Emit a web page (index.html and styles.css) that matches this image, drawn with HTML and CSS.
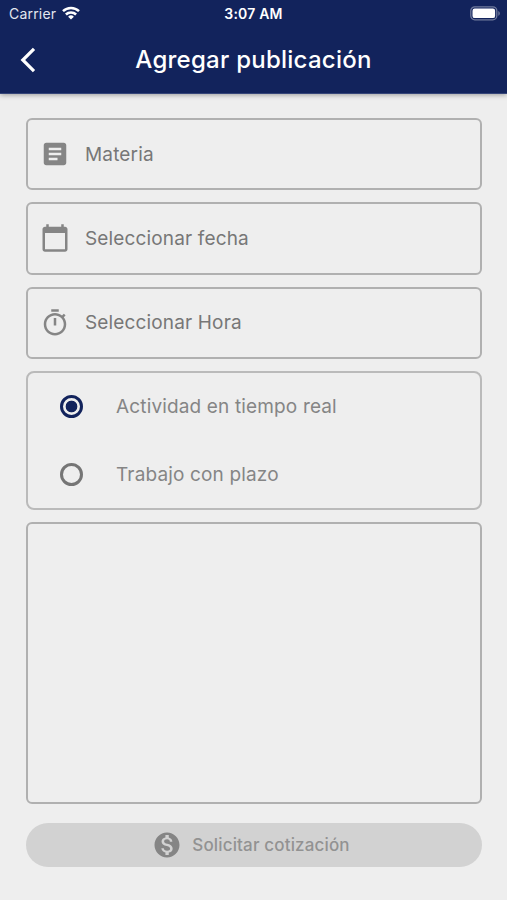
FILE: index.html
```html
<!DOCTYPE html>
<html lang="es">
<head>
    <meta charset="UTF-8">
    <meta name="viewport" content="width=device-width, initial-scale=1.0">
    <title>Agregar publicación</title>
    <link rel="stylesheet" href="styles.css">
</head>
<body>

    <header class="header">
        <!-- Barra de estado -->
        <div class="status-bar">
            <div class="carrier">
                <span>Carrier</span>
                <svg class="wifi" viewBox="0 0 18 14" fill="none" stroke="#fff" stroke-width="2.5">
                    <path d="M1 5.2a11.4 11.4 0 0 1 16 0"/>
                    <path d="M3.9 8.5a7.2 7.2 0 0 1 10.2 0"/>
                    <path d="M9 13.6l-2.9-2.9a4.1 4.1 0 0 1 5.8 0z" fill="#fff" stroke="none"/>
                </svg>
            </div>
            <div class="clock">3:07 AM</div>
            <div class="battery-wrap">
                <svg class="battery" viewBox="0 0 31 15">
                    <rect x="0.8" y="0.8" width="26" height="13" rx="4" fill="none" stroke="#fff" stroke-opacity="0.4" stroke-width="1.3"/>
                    <rect x="2.5" y="2.5" width="22.6" height="9.6" rx="2.2" fill="#fff"/>
                    <path d="M28.3 5v4.8c2-.8 2-4 0-4.8z" fill="#fff" fill-opacity="0.4"/>
                </svg>
            </div>
        </div>

        <!-- Titulo -->
        <div class="nav-bar">
            <button class="back-btn" aria-label="Volver">
                <svg viewBox="0 0 16 26" fill="none" stroke="#fff" stroke-width="3.2">
                    <path d="M14 1.8L2.8 13 14 24.2"/>
                </svg>
            </button>
            <h1>Agregar publicación</h1>
        </div>
    </header>

    <main class="form">
        <div class="field">
            <svg class="icon" viewBox="0 0 24 24">
                <path d="M19 3H5c-1.1 0-2 .9-2 2v14c0 1.1.9 2 2 2h14c1.1 0 2-.9 2-2V5c0-1.1-.9-2-2-2zm-5 14H7v-2h7v2zm3-4H7v-2h10v2zm0-4H7V7h10v2z"/>
            </svg>
            <span>Materia</span>
        </div>

        <div class="field">
            <svg class="icon" viewBox="0 0 24 24">
                <path d="M20 3h-1V1h-2v2H7V1H5v2H4c-1.1 0-2 .9-2 2v16c0 1.1.9 2 2 2h16c1.1 0 2-.9 2-2V5c0-1.1-.9-2-2-2zm0 18H4V8h16v13z"/>
            </svg>
            <span>Seleccionar fecha</span>
        </div>

        <div class="field">
            <svg class="icon" viewBox="0 0 24 24">
                <path d="M15 1H9v2h6V1zm-4 13h2V8h-2v6zm8.03-6.61l1.42-1.42c-.43-.51-.9-.99-1.41-1.41l-1.42 1.42C16.07 4.74 14.12 4 12 4c-4.97 0-9 4.03-9 9s4.02 9 9 9 9-4.03 9-9c0-2.12-.74-4.07-1.97-5.61zM12 20c-3.87 0-7-3.13-7-7s3.13-7 7-7 7 3.13 7 7-3.13 7-7 7z"/>
            </svg>
            <span>Seleccionar Hora</span>
        </div>

        <!-- Tipo de actividad -->
        <div class="options">
            <div class="option">
                <div class="radio checked"></div>
                <span>Actividad en tiempo real</span>
            </div>
            <div class="option">
                <div class="radio"></div>
                <span>Trabajo con plazo</span>
            </div>
        </div>

        <div class="description"></div>

        <button class="submit-btn" disabled>
            <svg class="icon" viewBox="0 0 24 24">
                <path d="M12 2C6.48 2 2 6.48 2 12s4.48 10 10 10 10-4.48 10-10S17.52 2 12 2zm1.41 16.09V20h-2.67v-1.93c-1.71-.36-3.16-1.46-3.27-3.4h1.96c.1 1.05.82 1.87 2.65 1.87 1.96 0 2.4-.98 2.4-1.59 0-.83-.44-1.61-2.67-2.14-2.48-.6-4.18-1.62-4.18-3.67 0-1.72 1.39-2.84 3.11-3.21V4h2.67v1.95c1.86.45 2.79 1.86 2.85 3.39H14.3c-.05-1.11-.64-1.87-2.22-1.87-1.5 0-2.4.68-2.4 1.64 0 .84.65 1.39 2.67 1.91s4.18 1.39 4.18 3.91c-.01 1.83-1.38 2.83-3.12 3.16z"/>
            </svg>
            <span>Solicitar cotización</span>
        </button>
    </main>

</body>
</html>
```
FILE: styles.css
```css
* {
    margin: 0;
    padding: 0;
    box-sizing: border-box;
}

body {
    font-family: Inter, Roboto, sans-serif;
    background-color: #eeeeee;
    min-height: 100vh;
}

.header {
    height: 94px;
    background-color: #12235c;
    color: #fff;
    border-bottom: 1px solid #354579;
    box-shadow: 0 1px 5px rgba(0, 0, 0, 0.35);
}

.status-bar {
    display: grid;
    grid-template-columns: 1fr auto 1fr;
    align-items: center;
    height: 27px;
    padding: 0 6px 0 9px;
    font-size: 14px;
}

.carrier {
    display: flex;
    align-items: center;
    gap: 6px;
    color: #e3e6ef;
    letter-spacing: 0.2px;
}

.wifi {
    width: 18px;
    height: 14px;
    margin-bottom: 2px;
}

.clock {
    margin-right: 3px;
    font-size: 14px;
    font-weight: 600;
    letter-spacing: 0.2px;
}

.battery-wrap {
    display: flex;
    justify-content: flex-end;
}

.battery {
    width: 31px;
    height: 15px;
}

.nav-bar {
    display: grid;
    grid-template-columns: 60px 1fr 60px;
    align-items: center;
    height: 65px;
}

.back-btn {
    height: 26px;
    padding-left: 20px;
    border: none;
    background: none;
    text-align: left;
}

.back-btn svg {
    display: block;
    width: 16px;
    height: 26px;
}

h1 {
    font-size: 24px;
    font-weight: 500;
    letter-spacing: 0.25px;
    text-align: center;
}

.form {
    display: flex;
    flex-direction: column;
    gap: 12px;
    padding: 24px 25px 0 26px;
    color: #777777;
    font-size: 19px;
    letter-spacing: 0.15px;
}

.field {
    display: flex;
    align-items: center;
    gap: 15px;
    height: 72.3px;
    padding-left: 12px;
    border: 2px solid #b0b0b0;
    border-radius: 6px;
}

.icon {
    width: 30px;
    height: 30px;
    fill: #858585;
}

.options {
    height: 139.5px;
    border: 2px solid #bababa;
    border-radius: 8px;
}

.option {
    display: flex;
    align-items: center;
    gap: 33px;
    height: 69.4px;
    padding-left: 32px;
    color: #858585;
}

.option:first-child {
    height: 67.4px;
}

.radio {
    width: 23px;
    height: 23px;
    border: 3px solid #757575;
    border-radius: 50%;
}

.radio.checked {
    border-color: #12235c;
    background: radial-gradient(circle, #12235c 5.5px, transparent 6.2px);
}

.description {
    height: 281.3px;
    border: 2px solid #b0b0b0;
    border-radius: 6px;
}

.submit-btn {
    display: flex;
    justify-content: center;
    align-items: center;
    gap: 10px;
    height: 44px;
    margin-top: 7.5px;
    padding-right: 6px;
    border: none;
    border-radius: 22px;
    background-color: #d2d2d2;
    color: #929292;
    font-family: inherit;
    font-size: 17px;
    font-weight: 500;
    letter-spacing: 0.15px;
}
```
